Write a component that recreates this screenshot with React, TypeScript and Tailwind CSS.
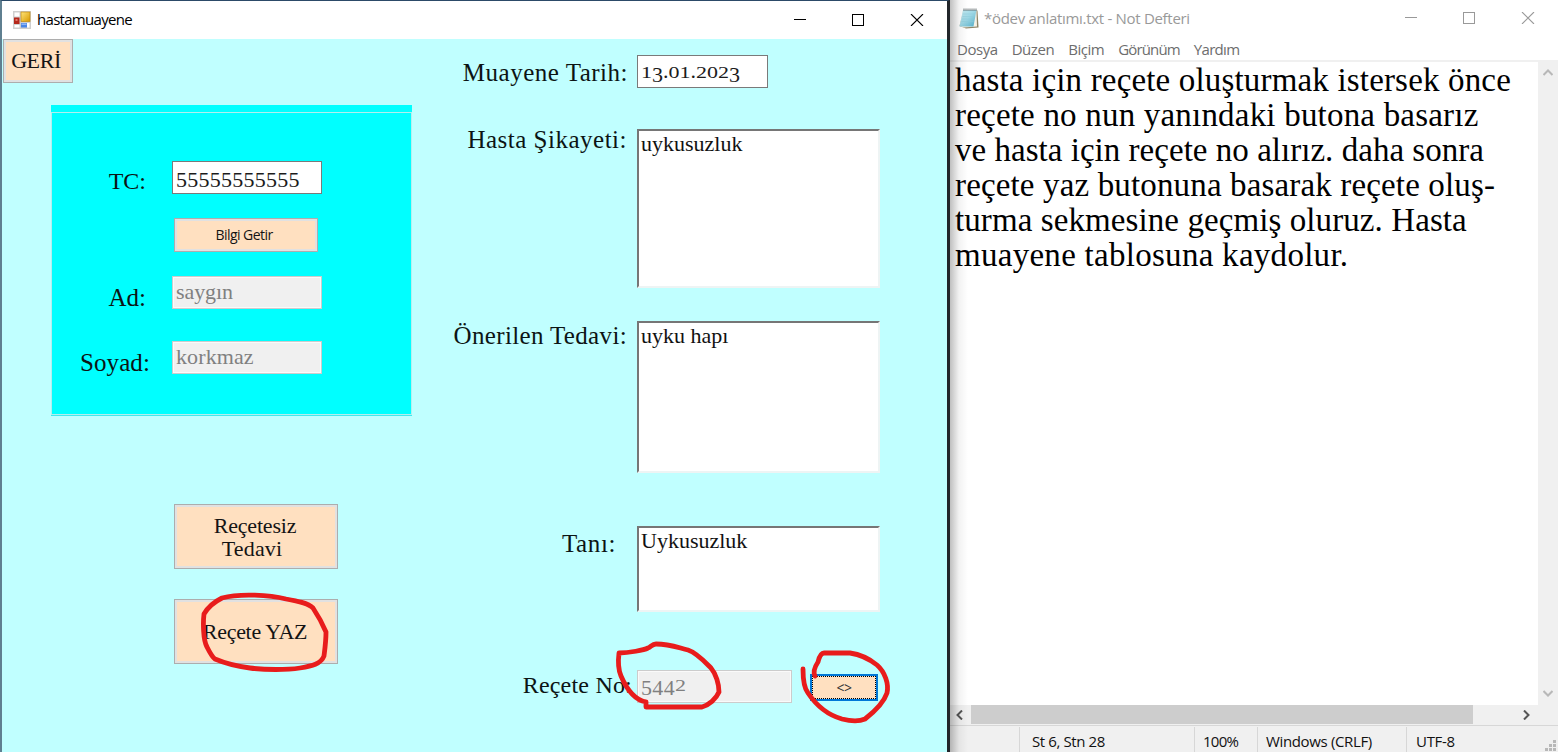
import React from "react";
import clsx from "clsx";

const serif = "font-['Liberation_Serif',serif]";
const sans = "font-['Open_Sans',sans-serif]";

function Label({ children, className }: { children: React.ReactNode; className?: string }) {
  return (
    <div className={clsx("h-8 shrink-0 whitespace-nowrap text-right leading-8 text-[#0c1414]", className)}>
      {children}
    </div>
  );
}

/* Old-style figures: 0, 1, 2 sit at x-height, the others hang below the baseline. */
function OldStyle({ value }: { value: string }) {
  return (
    <span>
      {value.split("").map((ch, i) => (
        <span
          key={i}
          className={clsx(
            "inline-block",
            "012".includes(ch) && "origin-[50%_81%] scale-y-[0.74]",
            "34579".includes(ch) && "translate-y-[4px]",
          )}
        >
          {ch}
        </span>
      ))}
    </span>
  );
}

function Field({ children, className, disabled }: { children: React.ReactNode; className?: string; disabled?: boolean }) {
  return (
    <div
      className={clsx(
        "h-[33px] shrink-0 whitespace-nowrap border pl-[3px] text-[22px] leading-6",
        disabled
          ? "border-[#cccccc] bg-[#f0f0f0] text-[#808080] shadow-[inset_0_0_0_1px_#fafafa]"
          : "border-[#7a7a7a] bg-white text-[#1c1c1c]",
        className,
      )}
    >
      {children}
    </div>
  );
}

function Memo({ children, className }: { children: React.ReactNode; className?: string }) {
  return (
    <div
      className={clsx(
        "w-[243px] shrink-0 border-2 border-b-[#eef4f4] border-l-[#767676] border-r-[#eef4f4] border-t-[#767676] bg-white pl-[2px] pt-px text-[22px] leading-6 text-[#111]",
        className,
      )}
    >
      {children}
    </div>
  );
}

function Btn({ children, className }: { children: React.ReactNode; className?: string }) {
  return (
    <div
      className={clsx(
        "flex shrink-0 flex-col items-center justify-center whitespace-nowrap border border-[#adadad] bg-[#ffe0c0] text-[#141414] shadow-[inset_0_0_0_2px_#e1e1e1]",
        className,
      )}
    >
      {children}
    </div>
  );
}

function WindowButtons({ color, className }: { color: string; className?: string }) {
  return (
    <svg className={className} width="130" height="12" viewBox="0 0 130 12" fill="none" stroke={color} shapeRendering="crispEdges">
      <path d="M0 5.5H12" />
      <rect x="58.5" y="0.5" width="11" height="11" />
      <path d="M117 0L129 12M129 0L117 12" shapeRendering="auto" strokeWidth="1.1" />
    </svg>
  );
}

function FormIcon() {
  return (
    <svg width="18" height="18" viewBox="0 0 18 18">
      <defs>
        <linearGradient id="gold" x1="0" y1="0" x2="1" y2="1">
          <stop offset="0" stopColor="#ffe57a" />
          <stop offset="1" stopColor="#d99a00" />
        </linearGradient>
      </defs>
      <rect width="18" height="18" fill="#cfcfcf" />
      <rect x="1.5" y="1.5" width="5" height="4" fill="#fff" />
      <rect x="1.5" y="14" width="5" height="2.5" fill="#fff" />
      <rect x="14" y="12" width="2.5" height="4.5" fill="#fff" />
      <rect x="1" y="6.5" width="5.5" height="6.5" fill="#b5281c" />
      <rect x="2.5" y="8" width="2" height="2" fill="#e2796c" />
      <rect x="8" y="1" width="9" height="9.5" fill="url(#gold)" stroke="#c28a10" strokeWidth="0.7" />
      <rect x="8" y="12" width="6" height="4.5" fill="#4a86e8" />
      <rect x="8.5" y="12.5" width="5" height="1.5" fill="#8fb6f5" />
    </svg>
  );
}

function NotepadIcon() {
  return (
    <svg width="20" height="21" viewBox="0 0 20 21">
      <defs>
        <linearGradient id="pad" x1="0" y1="0" x2="1" y2="1">
          <stop offset="0" stopColor="#c8edf4" />
          <stop offset="0.5" stopColor="#9bd6e4" />
          <stop offset="1" stopColor="#4ea9c4" />
        </linearGradient>
      </defs>
      <path d="M4.5 2.5H18.5L19.5 19.5L7 20.5L0.5 18Z" fill="#8d8466" />
      <path d="M4 2H17.5L18 18.5L5 19.5L0.5 18Z" fill="#f4f1e6" />
      <path d="M4 2H17.5L14.5 18.5H0.5Z" fill="url(#pad)" />
      <path d="M4 6H16M3.5 8.5H15.5M3 11H15M2.5 13.5H14.5" stroke="#8ccbd9" strokeWidth="0.5" />
      <path d="M5 0.5V3M7 0.5V3M9 0.5V3M11 0.5V3M13 0.5V3M15 0.5V3M17 0.5V3" stroke="#5b6568" strokeWidth="0.9" />
    </svg>
  );
}

function PatientPanel() {
  return (
    <div className="ml-[49px] mt-[22px] flex h-[311px] w-[361px] flex-col border-b border-[#3fe9ee] bg-[#00ffff] pt-[7px]">
      <div className="flex flex-1 flex-col border border-[#b4eeee]">
        <div className="mt-[48px] flex h-[33px]">
          <Label className="mt-[4px] w-[120px] pr-[26px] text-[24px]">TC:</Label>
          <Field className="w-[150px] pt-[6px] tracking-[0.25px]">55555555555</Field>
        </div>
        <Btn className={clsx("ml-[122px] mt-[24px] h-[34px] w-[144px] text-[14px] tracking-[-0.55px]", sans)}>
          <span className="-ml-1 -mt-px">Bilgi Getir</span>
        </Btn>
        <div className="mt-[24px] flex h-[33px]">
          <Label className="mt-[6px] w-[120px] pr-[26px] text-[25px]">Ad:</Label>
          <Field disabled className="w-[150px] pt-[3px] tracking-[-0.1px]">saygın</Field>
        </div>
        <div className="mt-[32px] flex h-[33px]">
          <Label className="mt-[6px] w-[120px] pr-[22px] text-[25px] tracking-[0.1px]">Soyad:</Label>
          <Field disabled className="w-[150px] pt-[3px] tracking-[0.1px]">korkmaz</Field>
        </div>
      </div>
    </div>
  );
}

function ExamWindow() {
  return (
    <div className={clsx("relative flex w-[950px] shrink-0 flex-col border-l-2 border-r-[3px] border-t border-l-[#5f7f90] border-r-[#22262a] border-t-[#2c4a68]", serif)}>
      <div className="flex h-[38px] shrink-0 items-center bg-white">
        <span className="ml-[11px] -mt-px"><FormIcon /></span>
        <span className={clsx("-mt-[2px] ml-[6px] text-[15px] tracking-[-0.7px] text-black", sans)}>hastamuayene</span>
        <WindowButtons color="#000" className="ml-auto mr-[23px]" />
      </div>
      <div className="flex flex-1 bg-[#c0ffff]">
        <div className="w-[428px] shrink-0">
          <Btn className="ml-px h-[44px] w-[70px] text-[22px] tracking-[-0.4px]">
            <span className="-ml-1 -mt-[2px]">GERİ</span>
          </Btn>
          <PatientPanel />
          <Btn className="ml-[172px] mt-[88px] h-[65px] w-[164px] text-[22px] leading-[23px]">
            <span className="-ml-0.5 tracking-[-0.2px]">Reçetesiz</span>
            <span className="-ml-2 tracking-[0.2px]">Tedavi</span>
          </Btn>
          <Btn className="ml-[172px] mt-[30px] h-[65px] w-[164px] text-[22px] tracking-[-0.3px]">
            <span className="-ml-0.5">Reçete YAZ</span>
          </Btn>
        </div>
        <div className="flex flex-1 flex-col pt-[16px]">
          <div className="flex h-[33px]">
            <Label className="mt-[2px] w-[207px] pr-[9px] text-[25px] tracking-[0.5px]">Muayene Tarih:</Label>
            <Field className="w-[131px] pt-[3px]"><OldStyle value="13.01.2023" /></Field>
          </div>
          <div className="mt-[41px] flex">
            <Label className="-mt-[5px] w-[207px] pr-[10px] text-[25px] tracking-[0.5px]">Hasta Şikayeti:</Label>
            <Memo className="h-[159px]">uykusuzluk</Memo>
          </div>
          <div className="mt-[33px] flex">
            <Label className="-mt-px w-[207px] pr-[10px] text-[25px] tracking-[0.35px]">Önerilen Tedavi:</Label>
            <Memo className="h-[152px]">uyku hapı</Memo>
          </div>
          <div className="mt-[53px] flex">
            <Label className="mt-[2px] w-[207px] pr-[21px] text-[25px] tracking-[0.6px]">Tanı:</Label>
            <Memo className="h-[86px]">Uykusuzluk</Memo>
          </div>
          <div className="mt-[58px] flex">
            <Label className="-mt-px w-[207px] pr-[5px] text-[24px] tracking-[0.2px]">Reçete No:</Label>
            <Field disabled className="w-[155px] pt-px tracking-[0.3px]"><OldStyle value="5442" /></Field>
            <div className="ml-[18px] mt-[4px] h-[27px] w-[68px] border-2 border-[#0078d7] bg-[#ffe0c0]">
              <div className={clsx("flex h-full items-center justify-center border border-dotted border-black text-[14px] leading-none tracking-[-0.5px] text-[#333]", sans)}>
                {"<>"}
              </div>
            </div>
          </div>
        </div>
      </div>
    </div>
  );
}

function NoteWindow() {
  return (
    <div className={clsx("relative flex flex-1 flex-col bg-white", sans)}>
      <div className="flex h-[38px] shrink-0 items-center">
        <span className="ml-[9px] -mt-[2px]"><NotepadIcon /></span>
        <span className="-mt-[2px] ml-[5px] whitespace-nowrap text-[15px] tracking-[-0.3px] text-[#999]">*ödev anlatımı.txt - Not Defteri</span>
        <WindowButtons color="#999" className="-mt-[2px] ml-auto mr-[23px]" />
      </div>
      <div className="flex h-[22px] shrink-0 items-center gap-[14px] whitespace-nowrap pl-[7px] text-[15px] tracking-[-0.45px] text-[#6d6d6d]">
        <span>Dosya</span>
        <span>Düzen</span>
        <span>Biçim</span>
        <span className="tracking-[-0.85px]">Görünüm</span>
        <span className="tracking-[-0.7px]">Yardım</span>
      </div>
      <div className="flex flex-1 border-t-2 border-[#f0f0f0]">
        <div className={clsx("flex-1 whitespace-nowrap pl-[5px] pt-px text-[33px] leading-[35px] text-black", serif)}>
          <p className="tracking-[0.17px]">hasta için reçete oluşturmak istersek önce</p>
          <p className="tracking-[0.2px]">reçete no nun yanındaki butona basarız</p>
          <p className="tracking-[0.03px]">ve hasta için reçete no alırız. daha sonra</p>
          <p className="tracking-[0.15px]">reçete yaz butonuna basarak reçete oluş-</p>
          <p className="tracking-[0.09px]">turma sekmesine geçmiş oluruz. Hasta</p>
          <p className="tracking-[0.28px]">muayene tablosuna kaydolur.</p>
        </div>
        <div className="flex w-[20px] shrink-0 flex-col items-center justify-between bg-[#f0f0f0] pb-[8px] pt-[7px]">
          <svg width="10" height="7" viewBox="0 0 10 7" fill="none" stroke="#b8b8b8" strokeWidth="2"><path d="M0.5 6L5 1.5L9.5 6" /></svg>
          <svg width="10" height="7" viewBox="0 0 10 7" fill="none" stroke="#b8b8b8" strokeWidth="2"><path d="M0.5 1L5 5.5L9.5 1" /></svg>
        </div>
      </div>
      <div className="flex h-[20px] shrink-0 items-center bg-[#f0f0f0]">
        <svg className="ml-[6px]" width="7" height="10" viewBox="0 0 7 10" fill="none" stroke="#555" strokeWidth="2"><path d="M6 0.5L1.5 5L6 9.5" /></svg>
        <div className="mb-px ml-[8px] h-[19px] w-[502px] bg-[#cdcdcd]" />
        <svg className="ml-[50px]" width="7" height="10" viewBox="0 0 7 10" fill="none" stroke="#555" strokeWidth="2"><path d="M1 0.5L5.5 5L1 9.5" /></svg>
      </div>
      <div className="flex h-[27px] shrink-0 border-t border-[#d7d7d7] bg-[#f0f0f0] pt-px text-[15px] leading-[28px] text-[#111]">
        <div className="w-[69px]" />
        <div className="w-[175px] border-l border-[#d7d7d7] pl-[12px] tracking-[-0.4px]">St 6, Stn 28</div>
        <div className="w-[63px] border-l border-[#d7d7d7] pl-[8px] tracking-[-0.75px]">100%</div>
        <div className="w-[149px] border-l border-[#d7d7d7] pl-[8px] tracking-[-0.35px]">Windows (CRLF)</div>
        <div className="flex-1 border-l border-[#d7d7d7] pl-[9px] tracking-[-0.3px]">UTF-8</div>
        <svg className="mt-[13px]" width="13" height="12" viewBox="0 0 13 12" fill="#b8b8b8">
          <path d="M8 0h3v3h-3zM4 4h3v3h-3zM8 4h3v3h-3zM0 8h3v3h-3zM4 8h3v3h-3zM8 8h3v3h-3z" />
        </svg>
      </div>
      <div className="pointer-events-none absolute inset-y-0 left-0 w-[18px] bg-gradient-to-r from-black/25 via-black/5 to-transparent" />
    </div>
  );
}

export default function App() {
  return (
    <div className="relative flex h-[752px] w-[1558px] overflow-hidden bg-white">
      <ExamWindow />
      <NoteWindow />
      <svg
        className="pointer-events-none absolute left-0 top-0"
        width="950"
        height="752"
        viewBox="0 0 950 752"
        fill="none"
        stroke="#e81c1c"
        strokeWidth="4.8"
        strokeLinecap="round"
        strokeLinejoin="round"
      >
        <path d="M222 598C214 602 208 607 204 614C203 622 203 640 207 647C209 651 212 657 215 659C222 662 235 666 250 668C265 670 287 670 300 668C312 666 321 664 324 656C325 648 326 641 326 632C323 625 317 614 313 608C308 603 297 601 286 599C270 595 240 593 222 598Z" />
        <path d="M646 702C635 700 627 690 621 676C618 669 618 661 619 653C629 653 644 650 648 648C651 647 652 644 656 644C670 644 679 648 688 650C697 653 705 662 711 668C716 674 719 684 719 692C716 699 709 705 702 707H646V702" />
        <path d="M803 669C803 681 804 688 808 693C816 705 828 715 842 719C850 721 858 722 865 719C874 712 884 702 887 693C889 684 885 672 877 665C867 657 857 654 850 653H824C821 653 819 658 818 662C814 668 813 672 815 676" />
      </svg>
    </div>
  );
}
